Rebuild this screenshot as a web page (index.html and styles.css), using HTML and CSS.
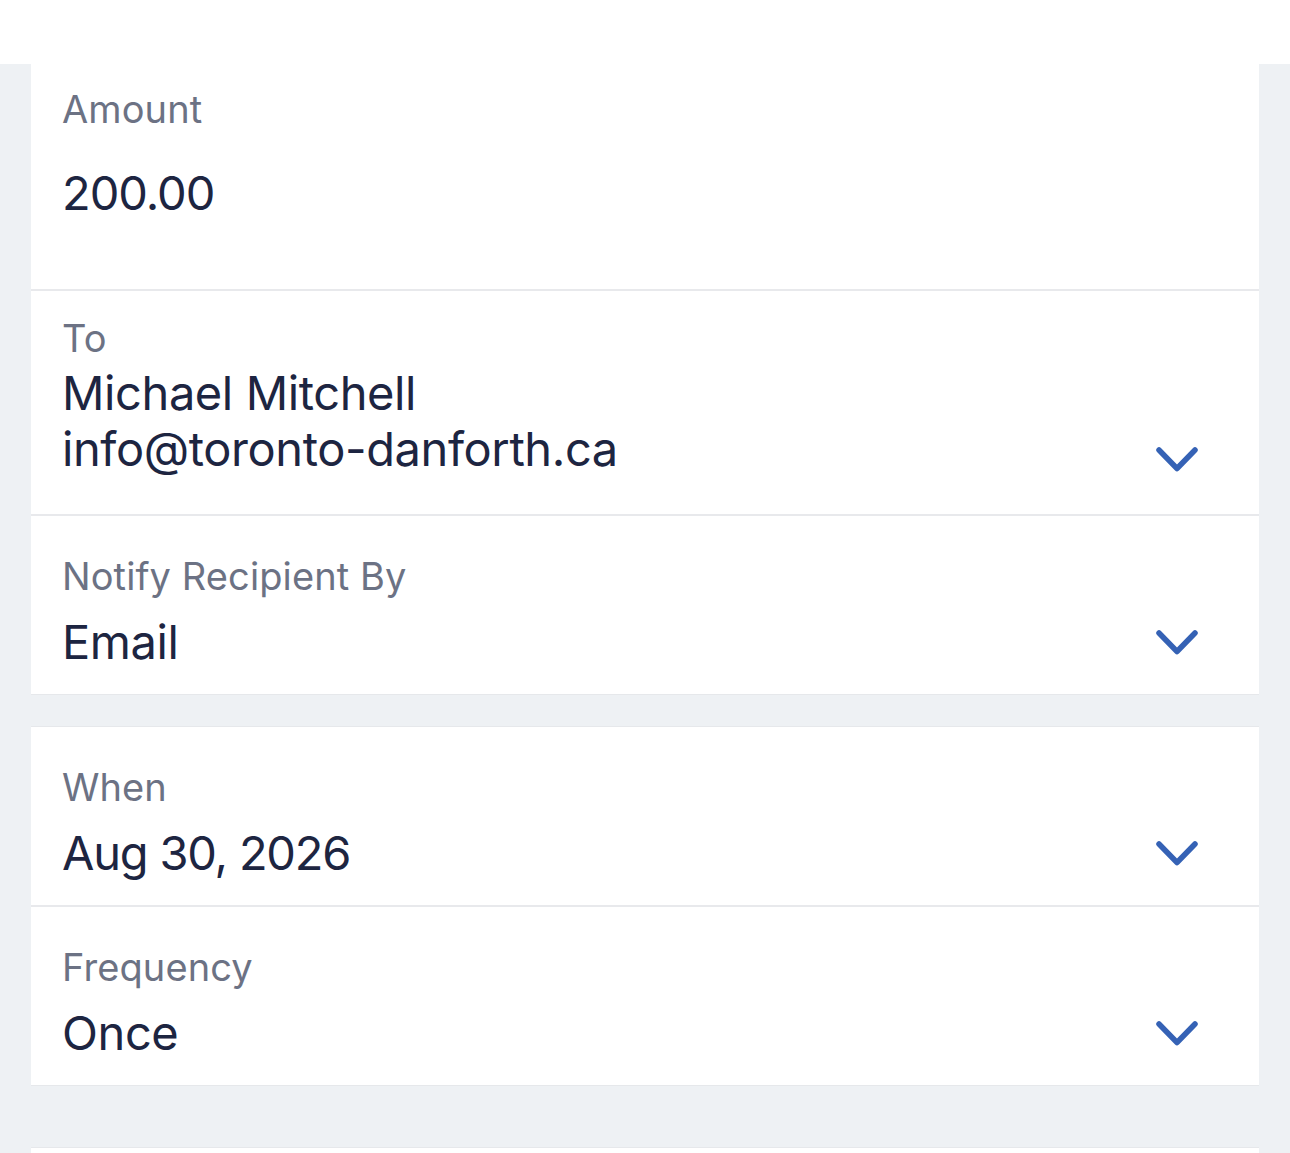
FILE: index.html
```html
<!DOCTYPE html>
<html lang="en">
  <head>
    <meta charset="UTF-8" />
    <meta name="viewport" content="width=device-width, initial-scale=1.0" />
    <title>Send Money</title>
    <link rel="stylesheet" href="styles.css">
  </head>
  <body>
    <header class="topbar"></header>

    <main class="page">
      <section class="card">
        <div class="field field-amount">
          <span class="label">Amount</span>
          <span class="value">200.00</span>
        </div>
        <div class="field field-to">
          <div class="field-body">
            <span class="label">To</span>
            <span class="value">Michael Mitchell</span>
            <span class="value">info@toronto-danforth.ca</span>
          </div>
          <span class="chevron">
            <svg width="42" height="25" viewBox="0 0 42 25"><polyline points="3,3 21,21.5 39,3" /></svg>
          </span>
        </div>
        <div class="field">
          <div class="field-body">
            <span class="label">Notify Recipient By</span>
            <span class="value">Email</span>
          </div>
          <span class="chevron">
            <svg width="42" height="25" viewBox="0 0 42 25"><polyline points="3,3 21,21.5 39,3" /></svg>
          </span>
        </div>
      </section>

      <section class="card">
        <div class="field">
          <div class="field-body">
            <span class="label">When</span>
            <span class="value num">Aug 30, 2026</span>
          </div>
          <span class="chevron">
            <svg width="42" height="25" viewBox="0 0 42 25"><polyline points="3,3 21,21.5 39,3" /></svg>
          </span>
        </div>
        <div class="field">
          <div class="field-body">
            <span class="label">Frequency</span>
            <span class="value">Once</span>
          </div>
          <span class="chevron">
            <svg width="42" height="25" viewBox="0 0 42 25"><polyline points="3,3 21,21.5 39,3" /></svg>
          </span>
        </div>
      </section>

      <section class="card card-more"></section>
    </main>
  </body>
</html>
```

FILE: styles.css
```css
* {
  margin: 0;
  padding: 0;
  box-sizing: border-box;
  font-family: Inter, "Noto Sans", Arial, sans-serif;
}
body {
  background: #eef1f4;
}
.topbar {
  height: 64px;
  background: #fff;
}
.page {
  display: flex;
  flex-direction: column;
  padding: 0 31px;
}
.card {
  background: #fff;
  border-top: 1px solid #e6e8eb;
  border-bottom: 1px solid #e6e8eb;
  margin-bottom: 31px;
}
.card:first-child {
  border-top: none;
}
.card + .card-more {
  margin-top: 30px;
  height: 160px;
}

/* one form row: label over value, chevron on the right */
.field {
  display: flex;
  align-items: flex-end;
  padding: 38px 61px 24px 31px;
  border-bottom: 2px solid #e8e9ec;
}
.field:last-child {
  border-bottom: none;
}
.field-body {
  flex: 1;
  display: flex;
  flex-direction: column;
}
.label {
  display: block;
  font-size: 38px;
  line-height: 44px;
  letter-spacing: 0.1px;
  color: #6c7284;
  margin-bottom: 16px;
}
.value {
  display: block;
  font-size: 47px;
  line-height: 56px;
  letter-spacing: -0.4px;
  color: #1d2541;
}
.value.num {
  letter-spacing: -1.2px;
}
.chevron {
  display: flex;
  align-items: center;
  height: 56px;
}
.chevron polyline {
  fill: none;
  stroke: #3562b5;
  stroke-width: 5.5;
  stroke-linecap: round;
  stroke-linejoin: round;
}

.field-amount {
  flex-direction: column;
  align-items: flex-start;
  padding-top: 23px;
  padding-bottom: 68px;
}
.field-amount .label {
  margin-bottom: 34px;
}
.field-amount .value {
  letter-spacing: -1px;
}
.field-to {
  padding-top: 25px;
  padding-bottom: 37px;
}
.field-to .label {
  margin-bottom: 5px;
}
.field-to .chevron {
  margin-bottom: -10px;
}
```
